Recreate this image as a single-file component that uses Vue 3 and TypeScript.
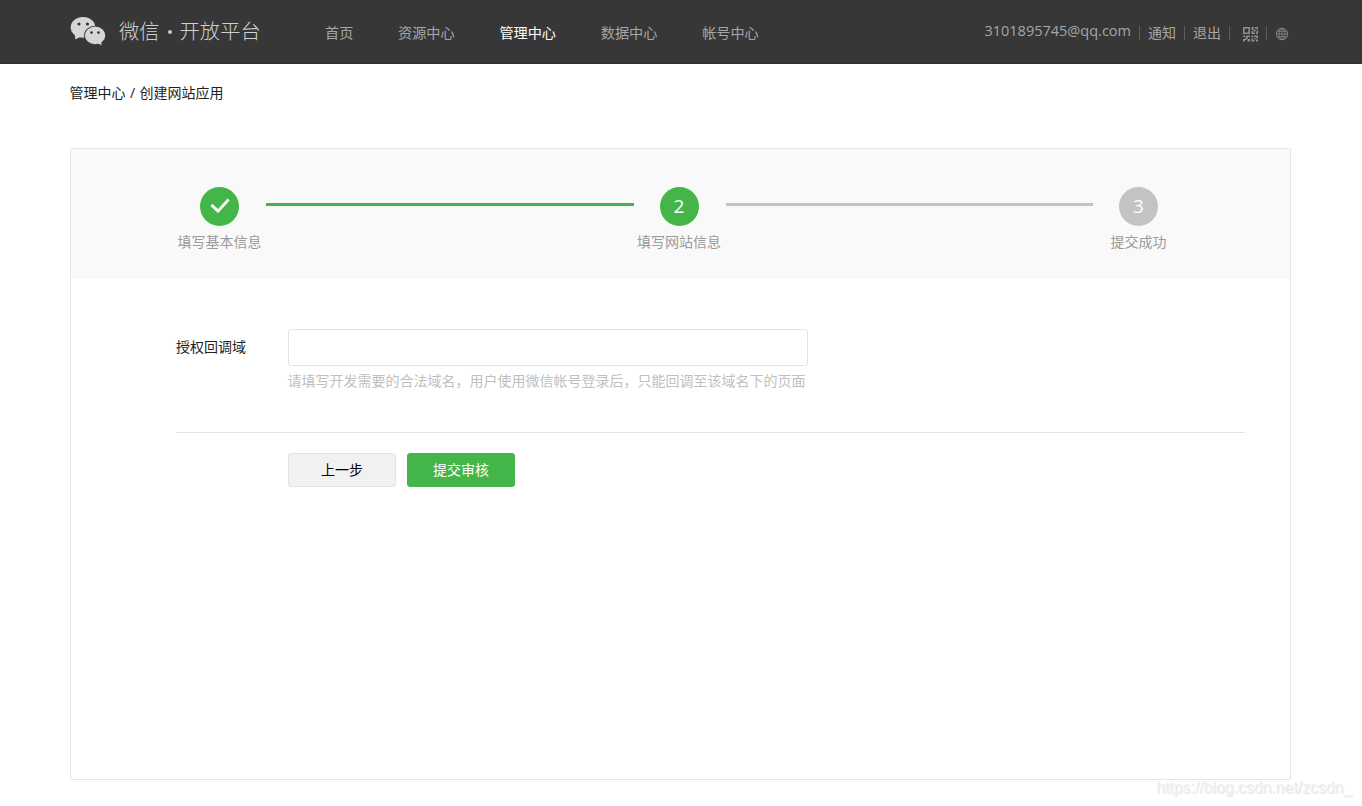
<script setup lang="ts">
import { ref } from 'vue'

interface NavItem {
  label: string
  active?: boolean
}
interface Step {
  label: string
  state: 'done' | 'current' | 'pending'
}

const nav: NavItem[] = [
  { label: '首页' },
  { label: '资源中心' },
  { label: '管理中心', active: true },
  { label: '数据中心' },
  { label: '帐号中心' },
]
const steps: Step[] = [
  { label: '填写基本信息', state: 'done' },
  { label: '填写网站信息', state: 'current' },
  { label: '提交成功', state: 'pending' },
]
const domain = ref('')
</script>

<template>
  <div class="page">
    <header class="header">
      <div class="brand">
        <svg class="logo" width="36" height="30" viewBox="0 0 36 30">
          <g fill="#d6d6d6">
            <ellipse cx="13" cy="11.3" rx="12.3" ry="10.4" />
            <path d="M5 18 L5.2 23.6 L11 20.5Z" />
          </g>
          <ellipse cx="25.1" cy="19.4" rx="11" ry="9.6" fill="#373737" />
          <g fill="#d6d6d6">
            <ellipse cx="25.1" cy="19.4" rx="10.2" ry="8.8" />
            <path d="M27 27 L31.7 29.2 L31 24Z" />
          </g>
          <g fill="#373737">
            <circle cx="9" cy="8" r="1.6" />
            <circle cx="17.4" cy="8" r="1.6" />
            <circle cx="21.5" cy="16.6" r="1.35" />
            <circle cx="28.5" cy="16.6" r="1.35" />
          </g>
        </svg>
        <span class="title">微信<i class="dot"></i>开放平台</span>
      </div>
      <nav class="nav">
        <a v-for="n in nav" :key="n.label" :class="{ active: n.active }">{{ n.label }}</a>
      </nav>
      <div class="account">
        <span class="mail">3101895745@qq.com</span>
        <i class="sep"></i>
        <a>通知</a>
        <i class="sep"></i>
        <a>退出</a>
        <i class="sep"></i>
        <svg class="qr" width="15" height="15" viewBox="0 0 15 15" fill="#8e8e8e">
          <path fill-rule="evenodd" d="M0 0h7v7H0zM1.6 1.6v3.8h3.8V1.6z" />
          <path d="M8.5 0h2.5v1.5h-1v1.5h-1.5zM12 0h3v2.5h-1.5V1.5h-1.5zM10.5 2.5h2v2h-2zM13.5 3.5h1.5v3.5h-2v-1.5h.5zM8.5 4h1.5v1.5h2V7h-3.5z" />
          <path d="M0 8.5h2v1h1.5v-1H7V10H5v1.5H3V10H0zM0 12h2v-1h1.5v2H2v1.5H0zM4.5 12H7v2.5H4.5zM8.5 8.5H10v2H8.5zM11 8.5h4v3h-1.5V10H11zM8.5 11.5H10V13h1.5v1.5h-3zM11 11h1.5v1.5H11zM13 12.5h2v2h-2z" />
        </svg>
        <i class="sep"></i>
        <svg class="globe" width="14" height="14" viewBox="0 0 14 14" fill="none" stroke="#8a8a8a" stroke-width=".8">
          <circle cx="7" cy="7" r="5.7" stroke="#989898" />
          <ellipse cx="7" cy="7" rx="2.9" ry="5.7" />
          <path d="M7 1.3v11.4M1.3 7h11.4M2.2 4.3h9.6M2.2 9.7h9.6" />
        </svg>
      </div>
    </header>

    <div class="crumbs">管理中心 / 创建网站应用</div>

    <main class="panel">
      <div class="steps">
        <template v-for="(s, i) in steps" :key="s.label">
          <div v-if="i" class="bar" :class="steps[i - 1].state"></div>
          <div class="step" :class="s.state">
            <span class="circle">
              <svg v-if="s.state === 'done'" width="20" height="16" viewBox="0 0 20 16">
                <path d="M1.4 6.8 L8 13.2 L18.6 1.5" fill="none" stroke="#f4faf4" stroke-width="3" />
              </svg>
              <template v-else>{{ i + 1 }}</template>
            </span>
            <span class="label">{{ s.label }}</span>
          </div>
        </template>
      </div>

      <form class="form" @submit.prevent>
        <div class="field">
          <label for="domain">授权回调域</label>
          <div>
            <input id="domain" v-model="domain" type="text" />
            <p class="hint">请填写开发需要的合法域名，用户使用微信帐号登录后，只能回调至该域名下的页面</p>
          </div>
        </div>
        <div class="actions">
          <button type="button" class="btn">上一步</button>
          <button type="submit" class="btn primary">提交审核</button>
        </div>
      </form>
    </main>
    <div class="watermark">https://blog.csdn.net/zcsdn_</div>
  </div>
</template>

<style>
body {
  margin: 0;
  background: #fff;
}
</style>

<style scoped>
.page {
  position: relative;
  height: 806px;
  overflow: hidden;
  box-sizing: border-box;
  font: 14px/20px 'Open Sans', 'Noto Sans CJK SC', sans-serif;
  color: #222;
}
.header {
  height: 64px;
  box-sizing: border-box;
  padding: 0 73px 0 70px;
  background: #373737;
  border-bottom: 1px solid #2f2f2f;
  display: flex;
  color: #a6a6a6;
}
.brand {
  width: 255px;
  display: flex;
  align-items: flex-start;
  padding-top: 16px;
  box-sizing: border-box;
}
.title {
  margin: -1px 0 0 13px;
  display: flex;
  align-items: center;
  font-size: 20.3px;
  line-height: 30px;
  font-weight: 300;
  font-family: 'Noto Sans CJK SC', sans-serif;
  color: #d0d0d0;
}
.dot {
  width: 4px;
  height: 4px;
  margin: 4px 8px 0;
  border-radius: 50%;
  background: #c8c8c8;
}
.nav {
  display: flex;
  gap: 44.8px;
  padding-top: 23px;
}
.nav a {
  font-size: 14.15px;
}
.nav .active {
  color: #fff;
}
.account {
  margin-left: auto;
  display: flex;
  align-items: flex-start;
  padding-top: 23px;
}
.mail {
  margin-top: -2px;
  font-size: 14.5px;
}
.sep {
  width: 1px;
  height: 14px;
  margin: 3px 8px 0;
  background: #5b5b5b;
}
.qr {
  margin: 4px 0 0 5px;
}
.globe {
  margin-top: 4px;
}
.crumbs {
  padding: 19px 69.5px 0;
  word-spacing: 0.8px;
}
.panel {
  height: 632px;
  margin: 45px 71px 0 70px;
  box-sizing: border-box;
  border: 1px solid #e5e5e5;
  border-radius: 2px;
}
.steps {
  height: 130px;
  box-sizing: border-box;
  padding: 38px 96.5px 0 93.5px;
  background: #f9f9f9;
  display: flex;
}
.step {
  width: 110px;
  display: flex;
  flex-direction: column;
  align-items: center;
  color: #9a9a9a;
}
.circle {
  width: 39px;
  height: 39px;
  border-radius: 50%;
  display: flex;
  align-items: center;
  justify-content: center;
  background: #44b549;
  color: #fff;
  font-size: 19px;
  line-height: 37px;
  padding-bottom: 1px;
  box-sizing: border-box;
}
.pending .circle {
  background: #c2c3c4;
}
.label {
  margin-top: 6px;
}
.bar {
  flex: 1;
  height: 3px;
  margin: 16px -9.7px 0 -8.5px;
  background: #c3c3c3;
}
.bar.done {
  background: #44b155;
}
.form {
  padding: 50px 45px 0 105px;
}
.field {
  display: flex;
  padding-bottom: 41px;
  border-bottom: 1px solid #e4e4e4;
}
.field label {
  width: 112px;
  padding-top: 8px;
}
input {
  display: block;
  width: 520px;
  height: 37px;
  box-sizing: border-box;
  border: 1px solid #e4e4e4;
  border-radius: 3px;
  padding: 0 10px;
  font: inherit;
  outline: none;
}
.hint {
  margin: 5px 0 0 -0.5px;
  color: #bfbfbf;
  white-space: nowrap;
}
.actions {
  display: flex;
  gap: 11px;
  padding: 20px 0 0 112px;
}
.btn {
  width: 108px;
  height: 34px;
  padding: 0;
  border: 1px solid #e3e3e8;
  border-radius: 3px;
  background: #f1f1f1;
  font: inherit;
  color: #000;
}
.btn.primary {
  border-color: #44b549;
  background: #44b549;
  color: #fff;
}
.watermark {
  position: absolute;
  right: 10px;
  bottom: 8px;
  font: 15.8px/20px 'Liberation Sans', sans-serif;
  color: #f2f2f2;
  text-shadow: 1px 1px 1px #e2e2e2;
}
</style>
